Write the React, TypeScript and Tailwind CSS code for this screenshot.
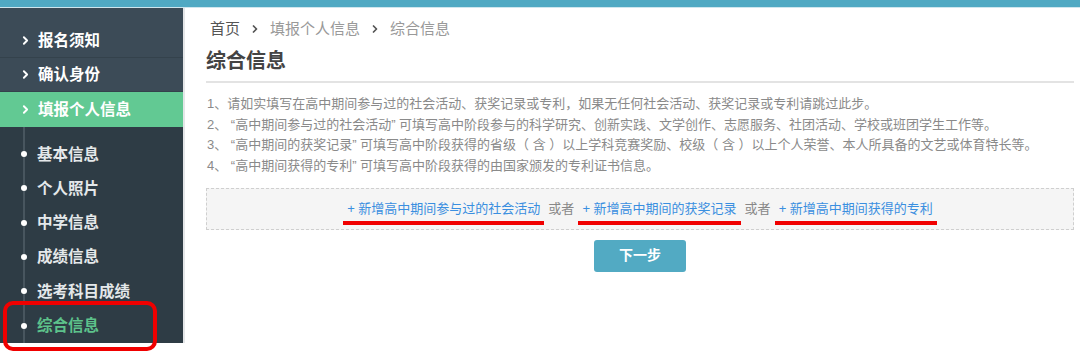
import { ChevronRight } from "lucide-react"

const TOP_MENU = ["报名须知", "确认身份"]
const SUB_MENU = ["基本信息", "个人照片", "中学信息", "成绩信息", "选考科目成绩", "综合信息"]

const NOTES = [
  "1、请如实填写在高中期间参与过的社会活动、获奖记录或专利，如果无任何社会活动、获奖记录或专利请跳过此步。",
  "2、 “高中期间参与过的社会活动” 可填写高中阶段参与的科学研究、创新实践、文学创作、志愿服务、社团活动、学校或班团学生工作等。",
  "3、 “高中期间的获奖记录” 可填写高中阶段获得的省级（ 含 ）以上学科竞赛奖励、校级（ 含 ）以上个人荣誉、本人所具备的文艺或体育特长等。",
  "4、 “高中期间获得的专利” 可填写高中阶段获得的由国家颁发的专利证书信息。",
]

function AddLink({ label }: { label: string }) {
  return (
    <span className="flex flex-col items-stretch">
      <span className="px-[4px] text-[13px] leading-[20px] text-[#3a8fe0]">+ {label}</span>
      <span className="mt-[2px] h-[4px] bg-[#f00000]" />
    </span>
  )
}

export default function App() {
  return (
    <div className="relative h-[356px] w-[1080px] overflow-hidden bg-white font-['Liberation_Sans','Noto_Sans_CJK_SC',sans-serif]">
      {/* top bar */}
      <div className="h-[8px] border-b border-[#cfe6ee] bg-[#50a9c3]" />

      <div className="flex">
        {/* sidebar */}
        <aside className="h-[335px] w-[185px] shrink-0 border-r-2 border-[#e4e6e8] bg-[#2e3c45]">
          <div className="bg-[#3c4b57] pt-[16px]">
            {TOP_MENU.map((m) => (
              <div key={m} className="flex h-[34px] items-center gap-[6px] border-b border-[#34424c] pl-[19px] text-[15.5px] font-bold text-white">
                <ChevronRight size={13} strokeWidth={3.5} />
                {m}
              </div>
            ))}
          </div>
          <div className="flex h-[35px] items-center gap-[6px] bg-[#62c993] pl-[19px] text-[15.5px] font-bold text-white">
            <ChevronRight size={13} strokeWidth={3.5} />
            填报个人信息
          </div>
          <div className="relative ml-[23px] border-l-2 border-[#48565f] pt-[10px]">
            {SUB_MENU.map((m, i) => (
              <div key={m} className="flex h-[34.3px] items-center">
                <span className="-ml-[4px] h-[6px] w-[6px] rounded-full bg-white" />
                <span className={`ml-[10px] text-[15.5px] font-semibold ${i === SUB_MENU.length - 1 ? "text-[#5dc28b]" : "text-[#e4e8ea]"}`}>{m}</span>
              </div>
            ))}
          </div>
        </aside>

        {/* main */}
        <main className="flex-1 pl-[21px] pr-[6px] pt-[11px]">
          <div className="flex items-center gap-[9px] pl-[4px] text-[15px] leading-[20px] text-[#999]">
            <span className="text-[#555]">首页</span>
            <ChevronRight size={12} strokeWidth={3.5} className="text-[#555]" />
            <span>填报个人信息</span>
            <ChevronRight size={12} strokeWidth={3.5} className="text-[#555]" />
            <span>综合信息</span>
          </div>
          <h1 className="mt-[8px] border-b-2 border-[#e3e3e3] pb-[5px] text-[20px] font-bold leading-[29px] text-[#444]">综合信息</h1>
          <div className="mt-[11px] pl-[1px] text-[13px] leading-[20.7px] text-[#8a8a8a]">
            {NOTES.map((n) => (
              <p key={n} className="whitespace-nowrap">{n}</p>
            ))}
          </div>
          <div className="mt-[11px] flex h-[42px] items-start justify-center gap-[4px] border border-dashed border-[#cfcfcf] bg-[#f5f5f5] pt-[10px]">
            <AddLink label="新增高中期间参与过的社会活动" />
            <span className="text-[13px] leading-[20px] text-[#888]">或者</span>
            <AddLink label="新增高中期间的获奖记录" />
            <span className="text-[13px] leading-[20px] text-[#888]">或者</span>
            <AddLink label="新增高中期间获得的专利" />
          </div>
          <div className="mt-[10px] flex justify-center">
            <button className="h-[32px] w-[92px] rounded-[3px] bg-[#52aac3] text-[14px] font-bold text-white">下一步</button>
          </div>
        </main>
      </div>

      {/* red annotation box */}
      <div className="absolute left-[3px] top-[301px] h-[50px] w-[154px] rounded-[10px] border-4 border-[#f00000]" />
    </div>
  )
}
